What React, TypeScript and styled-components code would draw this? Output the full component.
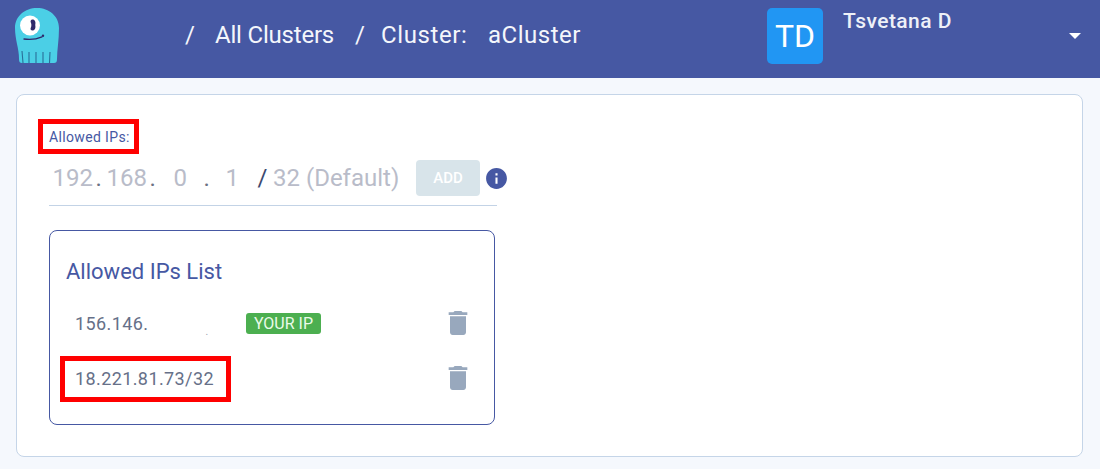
import React from "react";
import styled, { createGlobalStyle } from "styled-components";

const Global = createGlobalStyle`
  html, body { margin: 0; padding: 0; background: #f5f8fd; font-family: Roboto, "Liberation Sans", sans-serif; }
  * { box-sizing: border-box; }
`;
const Page = styled.div`width: 1100px; height: 469px; overflow: hidden; display: flex; flex-direction: column;`;
const Header = styled.header`
  height: 78px; background: #4658a3; color: #fff; display: flex; align-items: flex-start; flex: none;
`;
const LogoWrap = styled.div`width: 185px; flex: none; padding: 8px 0 0 15px; display: flex;`;
const Crumbs = styled.nav`
  width: 582px; flex: none; height: 70px; display: flex; align-items: center; font-size: 24px; color: #f4f6fb; white-space: nowrap;
`;
const Crumb = styled.span<{ $w?: number; $s?: number }>`
  ${p => (p.$w ? `width: ${p.$w}px; flex: none;` : "")}
  letter-spacing: ${p => p.$s ?? 0}px;
`;
const Avatar = styled.div`
  width: 56px; height: 56px; margin-top: 8px; border-radius: 5px; background: #2196f3; color: #fff; font-size: 32px;
  display: flex; align-items: center; justify-content: center; flex: none;
`;
const UserName = styled.div`
  margin: 8px 0 0 20px; width: 226px; font-size: 21px; font-weight: 500; letter-spacing: .45px; line-height: 26px; color: #eef1f8; flex: none;
`;
const Caret = styled.div`
  width: 0; height: 0; margin-top: 33px; border-left: 6px solid transparent; border-right: 6px solid transparent; border-top: 6px solid #fff;
`;
const Main = styled.main`padding: 16px 17px 12px 16px; flex: 1; display: flex;`;
const Card = styled.section`
  flex: 1; background: #fff; border: 1px solid #c5d5e8; border-radius: 8px; padding: 24px 0 0 21px;
`;
const Annotated = styled.div`
  display: inline-flex; align-items: center; border: 5px solid #ff0000;
`;
const FieldLabel = styled(Annotated)`
  height: 35px; width: 101px; padding-left: 6px; font-size: 14px; letter-spacing: .35px; color: #4658a3; white-space: nowrap;
`;
const InputRow = styled.div`
  margin: 6px 0 0 11px; width: 448px; height: 46px; border-bottom: 1px solid #c3d3e6; display: flex; align-items: flex-start;
  font-size: 24px; color: #b9bcc9;
`;
const Octets = styled.div`width: 367px; height: 36px; flex: none; padding-left: 3.500px; display: flex; align-items: center; white-space: nowrap;`;
const Seg = styled.span<{ $w: number; $dark?: boolean }>`
  width: ${p => p.$w}px; flex: none; color: ${p => (p.$dark ? "#3c4a70" : "inherit")};
`;
const Dot = styled(Seg)`color: #6a7183;`;
const AddButton = styled.button`
  width: 64px; height: 36px; border: 0; border-radius: 4px; background: #d8e4ea; color: #fff; font: 500 15px Roboto, sans-serif;
  padding: 0; flex: none;
`;
const InfoIcon = styled.svg`width: 25px; height: 25px; margin: 6px 0 0 4px; fill: #4658a3; flex: none;`;
const ListBox = styled.div`
  margin: 24px 0 0 11px; width: 446px; height: 195px; border: 1px solid #4658a3; border-radius: 8px; padding: 27px 0 0 16px;
`;
const ListTitle = styled.h3`margin: 0 0 26px; font-size: 22px; font-weight: 400; line-height: 28px; color: #4658a3;`;
const Row = styled.div`height: 55px; display: flex; align-items: flex-start; font-size: 18px; color: #667088; position: relative;`;
const IpText = styled.span`width: 180px; padding-left: 9px; line-height: 24px; flex: none; letter-spacing: .4px; white-space: nowrap; display: flex;`;
const Hidden = styled.span`margin: 8px 0 0 57px; font-size: 10px; color: #9aa0ad;`;
const Badge = styled.span`
  width: 75px; height: 21px; margin-top: 1px; border-radius: 3px; background: #4caf50; color: #eafbe9; font-size: 16px;
  display: flex; align-items: center; justify-content: center; flex: none;
`;
const Trash = styled.svg`
  position: absolute; left: 376px; top: -5px; width: 32px; height: 32px; fill: #98a8bd;
`;
const Annotation = styled(Annotated)`
  height: 46px; width: 171px; margin: -11px 0 0 -6px; padding: 0 0 1px 10px; font-size: 18px; letter-spacing: .4px; color: #667088;
`;

const trash = "M6 19c0 1.1.9 2 2 2h8c1.1 0 2-.9 2-2V7H6v12zM19 4h-3.5l-1-1h-5l-1 1H5v2h14V4z";

const Logo = () => (
  <svg width="46" height="56" viewBox="0 0 46 56">
    <path d="M0 20C0 8 10 0 22 0s22 8 22 20c0 12-2 22-2 31 0 3-1 4-3 4H7c-2 0-3-1-3-4 0-11-4-19-4-31z" fill="#4bcfe6" />
    <circle cx="15" cy="17.500" r="10" fill="#fff" />
    <path d="M17.500 11.500c2.500 0 3.500 2.500 2.700 5.500 .8 3-.4 5.500-2.700 5.500-1.700 0-2.400-1.300-1.700-2.700 .8-2 .8-3.500 0-5.300-.6-1.500 0-3 1.700-3z" fill="#2f2a6b" />
    <path d="M9 31c7 1 13 0 18-2.200" fill="none" stroke="#2f2a6b" strokeWidth="1.300" strokeLinecap="round" />
    <circle cx="28" cy="27.800" r="1.200" fill="#2f2a6b" />
    <path d="M7 43l1 12M14 44v11M21 44v11M28 44v11M35 44l-.5 11" stroke="#2a6f99" strokeWidth="1.100" />
  </svg>
);

export default function App() {
  return (
    <Page>
      <Global />
      <Header>
        <LogoWrap><Logo /></LogoWrap>
        <Crumbs>
          <Crumb $w={30}>/</Crumb>
          <Crumb $w={140} $s={-0.2}>All Clusters</Crumb>
          <Crumb $w={26}>/</Crumb>
          <Crumb $w={107} $s={0.6}>Cluster:</Crumb>
          <Crumb $s={0.5}>aCluster</Crumb>
        </Crumbs>
        <Avatar>TD</Avatar>
        <UserName>Tsvetana D</UserName>
        <Caret />
      </Header>
      <Main>
        <Card>
          <FieldLabel>Allowed IPs:</FieldLabel>
          <InputRow>
            <Octets>
              <Seg $w={43}>192</Seg>
              <Dot $w={11}>.</Dot>
              <Seg $w={43}>168</Seg>
              <Dot $w={24}>.</Dot>
              <Seg $w={30}>0</Seg>
              <Dot $w={22}>.</Dot>
              <Seg $w={32}>1</Seg>
              <Seg $w={15.5} $dark>/</Seg>
              <span>32 (Default)</span>
            </Octets>
            <AddButton>ADD</AddButton>
            <InfoIcon viewBox="0 0 24 24"><path d="M12 2C6.480 2 2 6.480 2 12s4.480 10 10 10 10-4.480 10-10S17.520 2 12 2zm1 15h-2v-6h2v6zm0-8h-2V7h2v2z" /></InfoIcon>
          </InputRow>
          <ListBox>
            <ListTitle>Allowed IPs List</ListTitle>
            <Row>
              <IpText>156.146.<Hidden>.</Hidden></IpText>
              <Badge>YOUR IP</Badge>
              <Trash viewBox="0 0 24 24"><path d={trash} /></Trash>
            </Row>
            <Row>
              <Annotation>18.221.81.73/32</Annotation>
              <Trash viewBox="0 0 24 24"><path d={trash} /></Trash>
            </Row>
          </ListBox>
        </Card>
      </Main>
    </Page>
  );
}
